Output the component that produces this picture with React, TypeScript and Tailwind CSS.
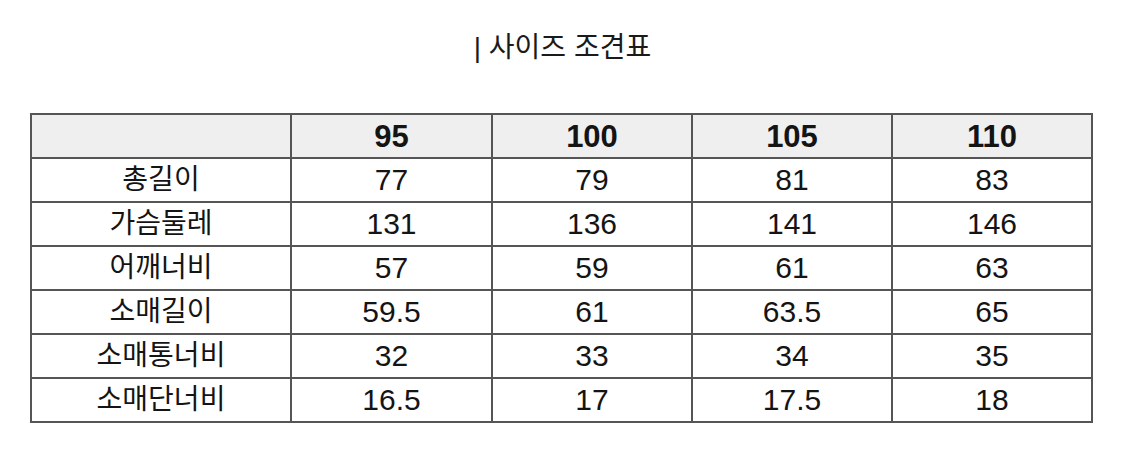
export default function App() {
  const cols = ["95", "100", "105", "110"];
  const rows: [string, string[]][] = [
    ["총길이", ["77", "79", "81", "83"]],
    ["가슴둘레", ["131", "136", "141", "146"]],
    ["어깨너비", ["57", "59", "61", "63"]],
    ["소매길이", ["59.5", "61", "63.5", "65"]],
    ["소매통너비", ["32", "33", "34", "35"]],
    ["소매단너비", ["16.5", "17", "17.5", "18"]],
  ];
  return (
    <div
      className="w-[1125px] h-[454px] bg-white text-[#141414]"
      style={{ fontFamily: '"Liberation Sans", "Noto Sans CJK KR", sans-serif' }}
    >
      <div className="h-[113px] pt-[32px] text-center text-[28px] leading-[32px] text-[#1a1a1a]">
        | 사이즈 조견표
      </div>
      <table className="ml-[30px] w-[1061px] border-collapse table-fixed">
        <colgroup>
          <col className="w-[260px]" />
          <col className="w-[201px]" />
          <col className="w-[200px]" />
          <col className="w-[200px]" />
          <col className="w-[200px]" />
        </colgroup>
        <thead>
          <tr className="h-[44px] bg-[#efefef]">
            <th className="border-2 border-[#555555]"></th>
            {cols.map((c) => (
              <th key={c} className="border-2 border-[#555555] text-[31px] font-bold leading-none text-center">
                {c}
              </th>
            ))}
          </tr>
        </thead>
        <tbody>
          {rows.map(([label, vals]) => (
            <tr key={label} className="h-[44px]">
              <td className="border-2 border-[#555555] text-center text-[28px] leading-none">{label}</td>
              {vals.map((v, i) => (
                <td key={i} className="border-2 border-[#555555] text-center text-[30px] leading-none">
                  {v}
                </td>
              ))}
            </tr>
          ))}
        </tbody>
      </table>
    </div>
  );
}
